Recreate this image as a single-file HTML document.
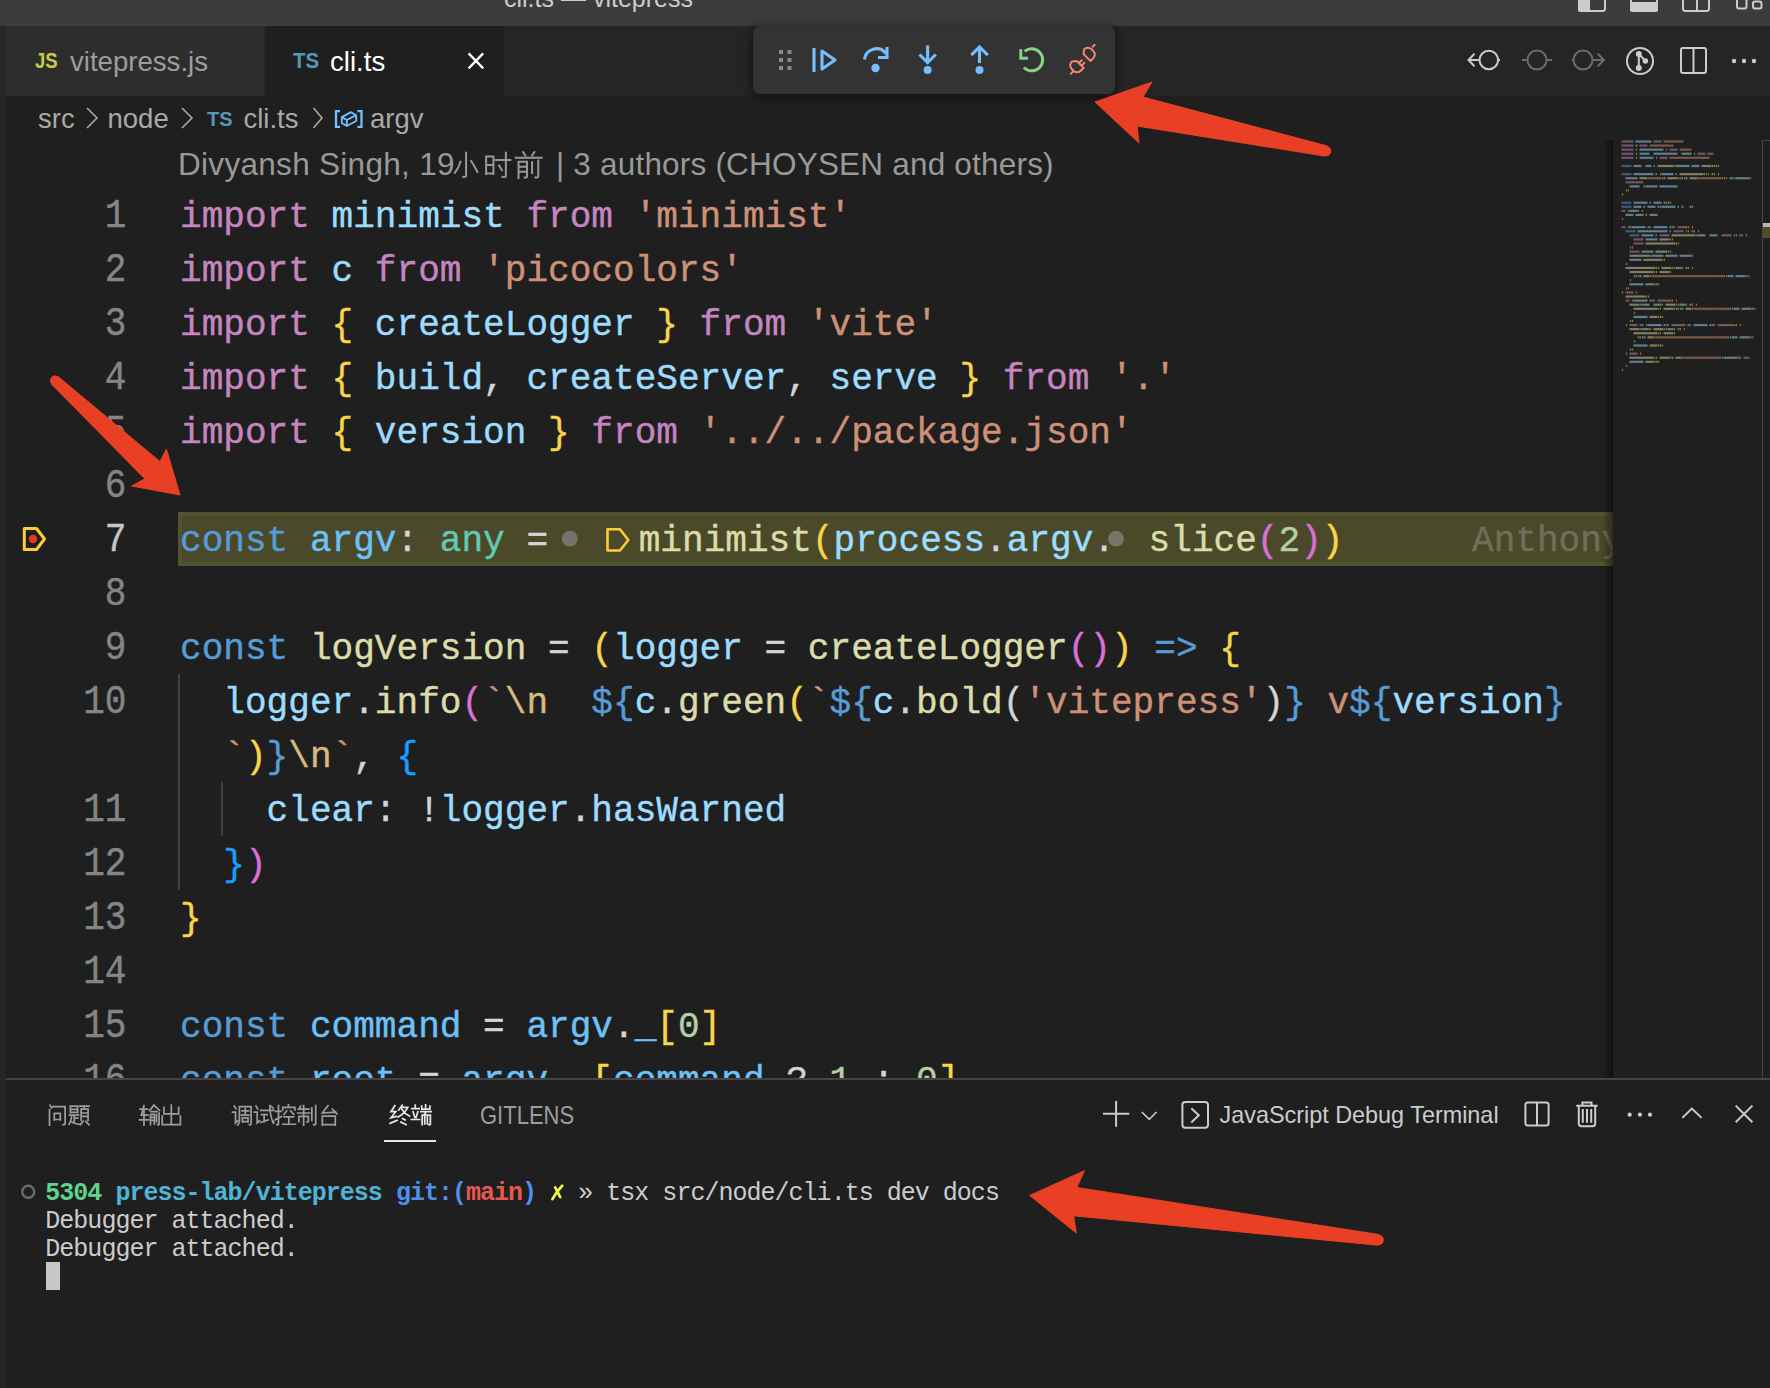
<!DOCTYPE html>
<html><head><meta charset="utf-8">
<style>
*{margin:0;padding:0;box-sizing:border-box}
html,body{width:1770px;height:1388px;overflow:hidden;background:#1f1f1f}
body{position:relative;font-family:"Liberation Sans",sans-serif}
.abs{position:absolute}
.mono{font-family:"Liberation Mono",monospace}
.cl{position:absolute;white-space:pre;font-family:"Liberation Mono",monospace;font-size:36.08px;-webkit-text-stroke:0.4px currentColor;line-height:54px;height:54px}
.ln{position:absolute;left:61.5px;width:65px;text-align:right;white-space:pre;-webkit-text-stroke:0.4px currentColor;transform:scaleY(1.11);transform-origin:0 36.6px;font-family:"Liberation Mono",monospace;font-size:36.08px;line-height:54px;height:54px}
.t{position:absolute;white-space:pre;line-height:1}
</style></head><body>
<!-- title bar -->
<div class="abs" style="left:0;top:0;width:1770px;height:26px;background:#3c3c3c"></div>
<div class="t" style="left:504px;top:-14px;font-size:25px;color:#cccccc">cli.ts — vitepress</div>
<svg class="abs" style="left:0;top:0" width="1770" height="26">
 <g fill="none" stroke="#cccccc" stroke-width="2">
  <rect x="1579" y="-6" width="26" height="17" rx="2.5"/>
  <rect x="1631" y="-6" width="26" height="17" rx="2.5"/>
  <rect x="1683" y="-6" width="26" height="17" rx="2.5"/><line x1="1697" y1="-6" x2="1697" y2="11"/>
  <rect x="1737" y="-6" width="9.5" height="14.5" rx="2"/>
  <rect x="1753" y="1.5" width="8.5" height="7" rx="2"/>
 </g>
 <rect x="1578" y="-6" width="12" height="18" rx="2.5" fill="#cccccc"/>
 <rect x="1630" y="2" width="28" height="10" rx="2.5" fill="#cccccc"/>
</svg>
<!-- left strip -->
<div class="abs" style="left:0;top:26px;width:6px;height:1362px;background:#262626"></div>
<!-- tab bar -->
<div class="abs" style="left:6px;top:26px;width:1764px;height:70px;background:#252526"></div>
<div class="abs" style="left:6px;top:26px;width:258px;height:70px;background:#2d2d2d"></div>
<div class="abs" style="left:266px;top:26px;width:238px;height:70px;background:#1f1f1f"></div>
<div class="t" style="left:35px;top:49.5px;font-size:22px;font-weight:bold;color:#cbcb41;transform:scaleX(0.84);transform-origin:0 0">JS</div>
<div class="t" style="left:70px;top:47.8px;font-size:27.6px;color:#9d9d9d">vitepress.js</div>
<div class="t" style="left:293px;top:49.5px;font-size:22px;font-weight:bold;color:#519aba;transform:scaleX(0.93);transform-origin:0 0">TS</div>
<div class="t" style="left:330px;top:48.3px;font-size:27.6px;color:#ffffff">cli.ts</div>
<svg class="abs" style="left:0;top:0" width="1770" height="100">
 <path d="M468.6 53.4L483.2 68.4M483.2 53.4L468.6 68.4" stroke="#ffffff" stroke-width="2.3"/>
 <!-- editor actions -->
 <g fill="none" stroke="#cccccc" stroke-width="2">
  <circle cx="1488.8" cy="60" r="9.3"/><path d="M1468.5 60H1479.5M1498 60H1500M1474.5 53.8L1468.5 60L1474.5 66.2"/>
 </g>
 <g fill="none" stroke="#6b6b6b" stroke-width="2">
  <circle cx="1537" cy="60" r="9.5"/><path d="M1522 60H1527.5M1546.5 60H1552"/>
  <circle cx="1583" cy="60" r="9.5"/><path d="M1572 60H1573.5M1592.5 60H1604M1597.5 53.5L1604 60L1597.5 66.5"/>
 </g>
 <g fill="none" stroke="#cccccc" stroke-width="2">
  <circle cx="1640" cy="61" r="13"/><path d="M1638.8 54V68M1638.8 54L1645.4 61"/>
  <rect x="1681" y="48" width="25" height="25" rx="2"/><line x1="1693.5" y1="48" x2="1693.5" y2="73"/>
 </g>
 <g fill="#cccccc"><circle cx="1638.8" cy="54" r="3"/><circle cx="1645.4" cy="61" r="2.8"/><circle cx="1638.8" cy="68" r="3"/>
  <circle cx="1734" cy="61" r="2.2"/><circle cx="1744" cy="61" r="2.2"/><circle cx="1754" cy="61" r="2.2"/></g>
</svg>
<!-- debug toolbar -->
<div class="abs" style="left:753px;top:26px;width:362px;height:68px;background:#333333;border-radius:7px;box-shadow:0 2px 8px 2px rgba(0,0,0,0.45)"></div>
<svg class="abs" style="left:0;top:0" width="1200" height="100">
 <g fill="#8a8a8a"><rect x="779" y="50" width="4" height="4"/><rect x="787.5" y="50" width="4" height="4"/><rect x="779" y="58" width="4" height="4"/><rect x="787.5" y="58" width="4" height="4"/><rect x="779" y="66" width="4" height="4"/><rect x="787.5" y="66" width="4" height="4"/></g>
 <g fill="none" stroke="#75beff" stroke-width="3.1">
  <line x1="814" y1="48" x2="814" y2="72"/>
  <path d="M822 51L835 60L822 69Z" stroke-linejoin="round"/>
  <path d="M864.5 59.5A12 12 0 0 1 886 53.5"/><path d="M887 47V57.5H878"/>
  <path d="M927.6 45.5V62M919.5 54.5L927.6 62.5L935.8 54.5"/>
  <path d="M979.5 63V47.5M971.3 55.2L979.5 47L987.8 55.2"/>
 </g>
 <g fill="#75beff"><circle cx="875.5" cy="68" r="4.2"/><circle cx="927.6" cy="70" r="4"/><circle cx="979.5" cy="70" r="4"/></g>
 <g fill="none" stroke="#89d185" stroke-width="3">
  <path d="M1024.6 51.3A11 11 0 1 1 1023.8 67.5"/><path d="M1020.8 49.2V58.2H1028"/>
 </g>
 <g fill="none" stroke="#f48771" stroke-width="2.3" stroke-linejoin="round" transform="translate(1081 59.3) scale(0.86) translate(-1083 -59)">
  <path d="M1074 73L1070.5 76.5"/><path d="M1096 45L1099.5 41.5"/>
  <path d="M1078 61L1086 69L1083 72A6 6 0 0 1 1074.5 72.5L1072 70A6 6 0 0 1 1072.5 61.5Z"/>
  <path d="M1080.5 63.5L1084.5 59.5M1083.5 66.5L1087.5 62.5"/>
  <path d="M1086 53L1094 61L1097 58A6 6 0 0 0 1097.5 49.5L1095 47A6 6 0 0 0 1086.5 47.5Z"/>
 </g>
</svg>
<!-- breadcrumbs -->
<div class="t" style="left:38px;top:104.8px;font-size:27.5px;color:#a9a9a9;">src</div>
<div class="t" style="left:107.5px;top:104.8px;font-size:27.5px;color:#a9a9a9;">node</div>
<div class="t" style="left:207px;top:109px;font-size:20px;font-weight:bold;color:#519aba">TS</div>
<div class="t" style="left:243.5px;top:104.8px;font-size:27.5px;color:#a9a9a9;">cli.ts</div>
<div class="t" style="left:370px;top:104.8px;font-size:27.5px;color:#a9a9a9;">argv</div>
<svg class="abs" style="left:0;top:96px" width="600" height="46">
 <g fill="none" stroke="#a9a9a9" stroke-width="1.6"><path d="M87 12L97 22L87 32M182 12L192 22L182 32M313.5 12L322 22L313.5 32"/></g>
 <g fill="none" stroke="#75beff" stroke-width="2">
  <path d="M340 15.2H336V30.8H340M357.5 15.2H361.5V30.8H357.5" stroke-width="2.3"/>
  <path d="M341.8 21.2L351 16.2L356.2 19.2V25L346.8 30L341.8 27Z M341.8 21.2L346.8 24L356.2 19.2M346.8 24V30" stroke-width="1.9" stroke-linejoin="round"/>
 </g>
</svg>
<!-- blame -->
<div class="t" style="left:178.00px;top:148.5px;font-size:31.5px;letter-spacing:0.3px;color:#999999">Divyansh</div>
<div class="t" style="left:319.00px;top:148.5px;font-size:31.5px;letter-spacing:0.3px;color:#999999">Singh,</div>
<div class="t" style="left:419.17px;top:148.5px;font-size:31.5px;letter-spacing:0.3px;color:#999999">19</div>
<div class="t" style="left:556.00px;top:148.5px;font-size:31.5px;letter-spacing:0.2px;color:#999999">|</div>
<div class="t" style="left:573.33px;top:148.5px;font-size:31.5px;letter-spacing:0.2px;color:#999999">3</div>
<div class="t" style="left:600.00px;top:148.5px;font-size:31.5px;letter-spacing:0.2px;color:#999999">authors</div>
<div class="t" style="left:715.42px;top:148.5px;font-size:31.5px;letter-spacing:0.2px;color:#999999">(CHOYSEN</div>
<div class="t" style="left:892.23px;top:148.5px;font-size:31.5px;letter-spacing:0.2px;color:#999999">and</div>
<div class="t" style="left:954.34px;top:148.5px;font-size:31.5px;letter-spacing:0.2px;color:#999999">others)</div>
<svg class="abs" style="left:0;top:0" width="700" height="200"><g transform="translate(452.00 150.94) scale(0.2819)"><path d="M50 6V86Q50 94 40 92M30 38Q24 60 10 78M68 36Q80 55 90 74" stroke="#999999" stroke-width="7.0" fill="none" stroke-linecap="square"/></g><g transform="translate(483.30 150.94) scale(0.2819)"><path d="M10 20V82M10 20H36V82M10 50H36M10 80H36M44 32H96M80 6V88Q80 95 68 92M56 52L66 68" stroke="#999999" stroke-width="7.0" fill="none" stroke-linecap="square"/></g><g transform="translate(514.60 150.94) scale(0.2819)"><path d="M30 4L38 16M70 4L62 16M4 24H96M14 38V96M14 38H44V90Q44 96 36 94M14 56H44M14 74H44M62 40V78M84 34V90Q84 96 74 94" stroke="#999999" stroke-width="7.0" fill="none" stroke-linecap="square"/></g></svg>
<!-- editor code area (clipped) -->
<div class="abs" style="left:0;top:0;width:1613px;height:1078px;overflow:hidden">
 <div class="abs" style="left:178px;top:512px;width:1435px;height:54px;background:#4a4a2a;border:4px solid #535331"></div>
 <svg class="abs" style="left:0;top:0" width="1613" height="1078">
  <g stroke="#404040" stroke-width="2"><line x1="179" y1="674" x2="179" y2="890"/><line x1="222" y1="782" x2="222" y2="836"/></g>
  <path d="M24.3 528.5H36.5L44.5 539L36.5 549.5H24.3Z" fill="none" stroke="#ffcc33" stroke-width="3" stroke-linejoin="round"/>
  <circle cx="33" cy="539" r="4.2" fill="#e03d22"/>
  <circle cx="569.8" cy="538.7" r="7.9" fill="#74746a"/>
  <circle cx="1116" cy="538.7" r="7.9" fill="#74746a"/>
  <path d="M607.5 529.3H620L628.3 540L620 550.5H607.5Z" fill="none" stroke="#ffcc33" stroke-width="2.6" stroke-linejoin="round"/>
 </svg>
<div class="ln" style="top:190.7px;color:#858585">1</div>
<div class="cl" style="top:190.7px;left:180.00px;color:#c586c0">import</div><div class="cl" style="top:190.7px;left:331.55px;color:#9cdcfe">minimist</div><div class="cl" style="top:190.7px;left:526.40px;color:#c586c0">from</div><div class="cl" style="top:190.7px;left:634.65px;color:#ce9178">&#x27;minimist&#x27;</div>
<div class="ln" style="top:244.7px;color:#858585">2</div>
<div class="cl" style="top:244.7px;left:180.00px;color:#c586c0">import</div><div class="cl" style="top:244.7px;left:331.55px;color:#9cdcfe">c</div><div class="cl" style="top:244.7px;left:374.85px;color:#c586c0">from</div><div class="cl" style="top:244.7px;left:483.10px;color:#ce9178">&#x27;picocolors&#x27;</div>
<div class="ln" style="top:298.7px;color:#858585">3</div>
<div class="cl" style="top:298.7px;left:180.00px;color:#c586c0">import</div><div class="cl" style="top:298.7px;left:331.55px;color:#f8d648">{</div><div class="cl" style="top:298.7px;left:374.85px;color:#9cdcfe">createLogger</div><div class="cl" style="top:298.7px;left:656.30px;color:#f8d648">}</div><div class="cl" style="top:298.7px;left:699.60px;color:#c586c0">from</div><div class="cl" style="top:298.7px;left:807.85px;color:#ce9178">&#x27;vite&#x27;</div>
<div class="ln" style="top:352.7px;color:#858585">4</div>
<div class="cl" style="top:352.7px;left:180.00px;color:#c586c0">import</div><div class="cl" style="top:352.7px;left:331.55px;color:#f8d648">{</div><div class="cl" style="top:352.7px;left:374.85px;color:#9cdcfe">build</div><div class="cl" style="top:352.7px;left:483.10px;color:#d4d4d4">,</div><div class="cl" style="top:352.7px;left:526.40px;color:#9cdcfe">createServer</div><div class="cl" style="top:352.7px;left:786.20px;color:#d4d4d4">,</div><div class="cl" style="top:352.7px;left:829.50px;color:#9cdcfe">serve</div><div class="cl" style="top:352.7px;left:959.40px;color:#f8d648">}</div><div class="cl" style="top:352.7px;left:1002.70px;color:#c586c0">from</div><div class="cl" style="top:352.7px;left:1110.95px;color:#ce9178">&#x27;.&#x27;</div>
<div class="ln" style="top:406.7px;color:#858585">5</div>
<div class="cl" style="top:406.7px;left:180.00px;color:#c586c0">import</div><div class="cl" style="top:406.7px;left:331.55px;color:#f8d648">{</div><div class="cl" style="top:406.7px;left:374.85px;color:#9cdcfe">version</div><div class="cl" style="top:406.7px;left:548.05px;color:#f8d648">}</div><div class="cl" style="top:406.7px;left:591.35px;color:#c586c0">from</div><div class="cl" style="top:406.7px;left:699.60px;color:#ce9178">&#x27;../../package.json&#x27;</div>
<div class="ln" style="top:460.7px;color:#858585">6</div>
<div class="ln" style="top:514.7px;color:#c6c6c6">7</div>
<div class="cl" style="top:514.7px;left:180.00px;color:#569cd6">const</div><div class="cl" style="top:514.7px;left:309.90px;color:#6cc2f7">argv</div><div class="cl" style="top:514.7px;left:396.50px;color:#d4d4d4">:</div><div class="cl" style="top:514.7px;left:439.80px;color:#62c9b2">any</div><div class="cl" style="top:514.7px;left:526.40px;color:#d4d4d4">=</div>
<div class="ln" style="top:568.7px;color:#858585">8</div>
<div class="ln" style="top:622.7px;color:#858585">9</div>
<div class="cl" style="top:622.7px;left:180.00px;color:#569cd6">const</div><div class="cl" style="top:622.7px;left:309.90px;color:#dcdcaa">logVersion</div><div class="cl" style="top:622.7px;left:548.05px;color:#d4d4d4">=</div><div class="cl" style="top:622.7px;left:591.35px;color:#f8d648">(</div><div class="cl" style="top:622.7px;left:613.00px;color:#9cdcfe">logger</div><div class="cl" style="top:622.7px;left:764.55px;color:#d4d4d4">=</div><div class="cl" style="top:622.7px;left:807.85px;color:#dcdcaa">createLogger</div><div class="cl" style="top:622.7px;left:1067.65px;color:#da70d6">()</div><div class="cl" style="top:622.7px;left:1110.95px;color:#f8d648">)</div><div class="cl" style="top:622.7px;left:1154.25px;color:#569cd6">=&gt;</div><div class="cl" style="top:622.7px;left:1219.20px;color:#f8d648">{</div>
<div class="ln" style="top:676.7px;color:#858585">10</div>
<div class="cl" style="top:676.7px;left:223.30px;color:#9cdcfe">logger</div><div class="cl" style="top:676.7px;left:353.20px;color:#d4d4d4">.</div><div class="cl" style="top:676.7px;left:374.85px;color:#dcdcaa">info</div><div class="cl" style="top:676.7px;left:461.45px;color:#da70d6">(</div><div class="cl" style="top:676.7px;left:483.10px;color:#ce9178">`</div><div class="cl" style="top:676.7px;left:504.75px;color:#d7ba7d">\n</div><div class="cl" style="top:676.7px;left:591.35px;color:#569cd6">${</div><div class="cl" style="top:676.7px;left:634.65px;color:#9cdcfe">c</div><div class="cl" style="top:676.7px;left:656.30px;color:#d4d4d4">.</div><div class="cl" style="top:676.7px;left:677.95px;color:#dcdcaa">green</div><div class="cl" style="top:676.7px;left:786.20px;color:#f8d648">(</div><div class="cl" style="top:676.7px;left:807.85px;color:#ce9178">`</div><div class="cl" style="top:676.7px;left:829.50px;color:#569cd6">${</div><div class="cl" style="top:676.7px;left:872.80px;color:#9cdcfe">c</div><div class="cl" style="top:676.7px;left:894.45px;color:#d4d4d4">.</div><div class="cl" style="top:676.7px;left:916.10px;color:#dcdcaa">bold</div><div class="cl" style="top:676.7px;left:1002.70px;color:#d4d4d4">(</div><div class="cl" style="top:676.7px;left:1024.35px;color:#ce9178">&#x27;vitepress&#x27;</div><div class="cl" style="top:676.7px;left:1262.50px;color:#d4d4d4">)</div><div class="cl" style="top:676.7px;left:1284.15px;color:#569cd6">}</div><div class="cl" style="top:676.7px;left:1327.45px;color:#ce9178">v</div><div class="cl" style="top:676.7px;left:1349.10px;color:#569cd6">${</div><div class="cl" style="top:676.7px;left:1392.40px;color:#9cdcfe">version</div><div class="cl" style="top:676.7px;left:1543.95px;color:#569cd6">}</div>
<div class="cl" style="top:730.7px;left:223.30px;color:#ce9178">`</div><div class="cl" style="top:730.7px;left:244.95px;color:#f8d648">)</div><div class="cl" style="top:730.7px;left:266.60px;color:#569cd6">}</div><div class="cl" style="top:730.7px;left:288.25px;color:#d7ba7d">\n</div><div class="cl" style="top:730.7px;left:331.55px;color:#ce9178">`</div><div class="cl" style="top:730.7px;left:353.20px;color:#d4d4d4">,</div><div class="cl" style="top:730.7px;left:396.50px;color:#179fff">{</div>
<div class="ln" style="top:784.7px;color:#858585">11</div>
<div class="cl" style="top:784.7px;left:266.60px;color:#9cdcfe">clear</div><div class="cl" style="top:784.7px;left:374.85px;color:#d4d4d4">:</div><div class="cl" style="top:784.7px;left:418.15px;color:#d4d4d4">!</div><div class="cl" style="top:784.7px;left:439.80px;color:#9cdcfe">logger</div><div class="cl" style="top:784.7px;left:569.70px;color:#d4d4d4">.</div><div class="cl" style="top:784.7px;left:591.35px;color:#9cdcfe">hasWarned</div>
<div class="ln" style="top:838.7px;color:#858585">12</div>
<div class="cl" style="top:838.7px;left:223.30px;color:#179fff">}</div><div class="cl" style="top:838.7px;left:244.95px;color:#da70d6">)</div>
<div class="ln" style="top:892.7px;color:#858585">13</div>
<div class="cl" style="top:892.7px;left:180.00px;color:#f8d648">}</div>
<div class="ln" style="top:946.7px;color:#858585">14</div>
<div class="ln" style="top:1000.7px;color:#858585">15</div>
<div class="cl" style="top:1000.7px;left:180.00px;color:#569cd6">const</div><div class="cl" style="top:1000.7px;left:309.90px;color:#6cc2f7">command</div><div class="cl" style="top:1000.7px;left:483.10px;color:#d4d4d4">=</div><div class="cl" style="top:1000.7px;left:526.40px;color:#6cc2f7">argv</div><div class="cl" style="top:1000.7px;left:613.00px;color:#d4d4d4">.</div><div class="cl" style="top:1000.7px;left:634.65px;color:#6cc2f7">_</div><div class="cl" style="top:1000.7px;left:656.30px;color:#f8d648">[</div><div class="cl" style="top:1000.7px;left:677.95px;color:#b5cea8">0</div><div class="cl" style="top:1000.7px;left:699.60px;color:#f8d648">]</div>
<div class="ln" style="top:1054.7px;color:#858585">16</div>
<div class="cl" style="top:1054.7px;left:180.00px;color:#569cd6">const</div><div class="cl" style="top:1054.7px;left:309.90px;color:#6cc2f7">root</div><div class="cl" style="top:1054.7px;left:418.15px;color:#d4d4d4">=</div><div class="cl" style="top:1054.7px;left:461.45px;color:#6cc2f7">argv</div><div class="cl" style="top:1054.7px;left:548.05px;color:#d4d4d4">.</div><div class="cl" style="top:1054.7px;left:569.70px;color:#6cc2f7">_</div><div class="cl" style="top:1054.7px;left:591.35px;color:#f8d648">[</div><div class="cl" style="top:1054.7px;left:613.00px;color:#6cc2f7">command</div><div class="cl" style="top:1054.7px;left:786.20px;color:#d4d4d4">?</div><div class="cl" style="top:1054.7px;left:829.50px;color:#b5cea8">1</div><div class="cl" style="top:1054.7px;left:872.80px;color:#d4d4d4">:</div><div class="cl" style="top:1054.7px;left:916.10px;color:#b5cea8">0</div><div class="cl" style="top:1054.7px;left:937.75px;color:#f8d648">]</div>
<div class="cl" style="top:514.7px;left:638.70px;color:#dcdcaa">minimist</div><div class="cl" style="top:514.7px;left:811.90px;color:#f8d648">(</div><div class="cl" style="top:514.7px;left:833.55px;color:#9cdcfe">process</div><div class="cl" style="top:514.7px;left:985.10px;color:#d4d4d4">.</div><div class="cl" style="top:514.7px;left:1006.75px;color:#9cdcfe">argv</div><div class="cl" style="top:514.7px;left:1093.35px;color:#d4d4d4">.</div>
<div class="cl" style="top:514.7px;left:1148.60px;color:#dcdcaa">slice</div><div class="cl" style="top:514.7px;left:1256.85px;color:#da70d6">(</div><div class="cl" style="top:514.7px;left:1278.50px;color:#b5cea8">2</div><div class="cl" style="top:514.7px;left:1300.15px;color:#da70d6">)</div><div class="cl" style="top:514.7px;left:1321.80px;color:#f8d648">)</div>
<div class="cl" style="top:514.7px;left:1472px;color:#6f6f5c">Anthony</div>
</div>
<!-- minimap -->
<div class="abs" style="left:1613px;top:96px;width:157px;height:982px;background:#1f1f1f"></div>
<svg class="abs" style="left:0;top:0" width="1770" height="1078">
 <defs><linearGradient id="msh" x1="0" x2="1"><stop offset="0" stop-color="#000" stop-opacity="0"/><stop offset="1" stop-color="#000" stop-opacity="0.5"/></linearGradient></defs>
 <rect x="1603" y="140" width="10" height="938" fill="url(#msh)"/>
 <g opacity="0.5"><rect x="1621.5" y="140.40" width="12.0" height="2.2" fill="#c586c0"/><rect x="1635.5" y="140.40" width="16.0" height="2.2" fill="#9cdcfe"/><rect x="1653.5" y="140.40" width="8.0" height="2.2" fill="#c586c0"/><rect x="1663.5" y="140.40" width="20.0" height="2.2" fill="#ce9178"/><rect x="1621.5" y="144.48" width="12.0" height="2.2" fill="#c586c0"/><rect x="1635.5" y="144.48" width="2.0" height="2.2" fill="#9cdcfe"/><rect x="1639.5" y="144.48" width="8.0" height="2.2" fill="#c586c0"/><rect x="1649.5" y="144.48" width="24.0" height="2.2" fill="#ce9178"/><rect x="1621.5" y="148.56" width="12.0" height="2.2" fill="#c586c0"/><rect x="1635.9" y="148.56" width="1.2" height="2.2" fill="#ffd700"/><rect x="1639.5" y="148.56" width="24.0" height="2.2" fill="#9cdcfe"/><rect x="1665.9" y="148.56" width="1.2" height="2.2" fill="#ffd700"/><rect x="1669.5" y="148.56" width="8.0" height="2.2" fill="#c586c0"/><rect x="1679.5" y="148.56" width="12.0" height="2.2" fill="#ce9178"/><rect x="1621.5" y="152.64" width="12.0" height="2.2" fill="#c586c0"/><rect x="1635.9" y="152.64" width="1.2" height="2.2" fill="#ffd700"/><rect x="1639.5" y="152.64" width="10.0" height="2.2" fill="#9cdcfe"/><rect x="1653.5" y="152.64" width="24.0" height="2.2" fill="#9cdcfe"/><rect x="1681.5" y="152.64" width="10.0" height="2.2" fill="#9cdcfe"/><rect x="1693.9" y="152.64" width="1.2" height="2.2" fill="#ffd700"/><rect x="1697.5" y="152.64" width="8.0" height="2.2" fill="#c586c0"/><rect x="1707.5" y="152.64" width="6.0" height="2.2" fill="#ce9178"/><rect x="1621.5" y="156.72" width="12.0" height="2.2" fill="#c586c0"/><rect x="1635.9" y="156.72" width="1.2" height="2.2" fill="#ffd700"/><rect x="1639.5" y="156.72" width="14.0" height="2.2" fill="#9cdcfe"/><rect x="1655.9" y="156.72" width="1.2" height="2.2" fill="#ffd700"/><rect x="1659.5" y="156.72" width="8.0" height="2.2" fill="#c586c0"/><rect x="1669.5" y="156.72" width="40.0" height="2.2" fill="#ce9178"/><rect x="1621.5" y="164.88" width="10.0" height="2.2" fill="#569cd6"/><rect x="1633.5" y="164.88" width="8.0" height="2.2" fill="#9cdcfe"/><rect x="1645.5" y="164.88" width="6.0" height="2.2" fill="#9cdcfe"/><rect x="1653.5" y="164.88" width="1.4" height="2.2" fill="#d4d4d4"/><rect x="1657.5" y="164.88" width="16.0" height="2.2" fill="#dcdcaa"/><rect x="1673.9" y="164.88" width="1.2" height="2.2" fill="#ffd700"/><rect x="1675.5" y="164.88" width="14.0" height="2.2" fill="#9cdcfe"/><rect x="1691.5" y="164.88" width="8.0" height="2.2" fill="#9cdcfe"/><rect x="1701.5" y="164.88" width="10.0" height="2.2" fill="#dcdcaa"/><rect x="1711.9" y="164.88" width="1.2" height="2.2" fill="#ffd700"/><rect x="1713.5" y="164.88" width="2.0" height="2.2" fill="#b5cea8"/><rect x="1715.9" y="164.88" width="1.2" height="2.2" fill="#ffd700"/><rect x="1717.9" y="164.88" width="1.2" height="2.2" fill="#ffd700"/><rect x="1621.5" y="173.04" width="10.0" height="2.2" fill="#569cd6"/><rect x="1633.5" y="173.04" width="20.0" height="2.2" fill="#9cdcfe"/><rect x="1655.5" y="173.04" width="1.4" height="2.2" fill="#d4d4d4"/><rect x="1659.9" y="173.04" width="1.2" height="2.2" fill="#ffd700"/><rect x="1661.5" y="173.04" width="12.0" height="2.2" fill="#9cdcfe"/><rect x="1675.5" y="173.04" width="1.4" height="2.2" fill="#d4d4d4"/><rect x="1679.5" y="173.04" width="24.0" height="2.2" fill="#dcdcaa"/><rect x="1703.9" y="173.04" width="1.2" height="2.2" fill="#ffd700"/><rect x="1705.9" y="173.04" width="1.2" height="2.2" fill="#ffd700"/><rect x="1707.9" y="173.04" width="1.2" height="2.2" fill="#ffd700"/><rect x="1711.5" y="173.04" width="1.4" height="2.2" fill="#d4d4d4"/><rect x="1713.5" y="173.04" width="1.4" height="2.2" fill="#d4d4d4"/><rect x="1717.9" y="173.04" width="1.2" height="2.2" fill="#ffd700"/><rect x="1625.5" y="177.12" width="12.0" height="2.2" fill="#9cdcfe"/><rect x="1639.5" y="177.12" width="8.0" height="2.2" fill="#dcdcaa"/><rect x="1647.9" y="177.12" width="1.2" height="2.2" fill="#ffd700"/><rect x="1649.5" y="177.12" width="10.0" height="2.2" fill="#ce9178"/><rect x="1659.5" y="177.12" width="1.4" height="2.2" fill="#d4d4d4"/><rect x="1661.9" y="177.12" width="1.2" height="2.2" fill="#ffd700"/><rect x="1663.5" y="177.12" width="2.0" height="2.2" fill="#9cdcfe"/><rect x="1667.5" y="177.12" width="10.0" height="2.2" fill="#dcdcaa"/><rect x="1677.9" y="177.12" width="1.2" height="2.2" fill="#ffd700"/><rect x="1679.5" y="177.12" width="2.0" height="2.2" fill="#ce9178"/><rect x="1681.5" y="177.12" width="1.4" height="2.2" fill="#d4d4d4"/><rect x="1683.9" y="177.12" width="1.2" height="2.2" fill="#ffd700"/><rect x="1685.5" y="177.12" width="2.0" height="2.2" fill="#9cdcfe"/><rect x="1689.5" y="177.12" width="8.0" height="2.2" fill="#dcdcaa"/><rect x="1697.9" y="177.12" width="1.2" height="2.2" fill="#ffd700"/><rect x="1699.5" y="177.12" width="22.0" height="2.2" fill="#ce9178"/><rect x="1721.9" y="177.12" width="1.2" height="2.2" fill="#ffd700"/><rect x="1723.9" y="177.12" width="1.2" height="2.2" fill="#ffd700"/><rect x="1725.9" y="177.12" width="1.2" height="2.2" fill="#ffd700"/><rect x="1729.5" y="177.12" width="2.0" height="2.2" fill="#9cdcfe"/><rect x="1731.5" y="177.12" width="1.4" height="2.2" fill="#d4d4d4"/><rect x="1733.9" y="177.12" width="1.2" height="2.2" fill="#ffd700"/><rect x="1735.5" y="177.12" width="14.0" height="2.2" fill="#9cdcfe"/><rect x="1749.9" y="177.12" width="1.2" height="2.2" fill="#ffd700"/><rect x="1625.5" y="181.20" width="10.0" height="2.2" fill="#ce9178"/><rect x="1635.5" y="181.20" width="8.0" height="2.2" fill="#ce9178"/><rect x="1629.5" y="185.28" width="10.0" height="2.2" fill="#9cdcfe"/><rect x="1643.5" y="185.28" width="1.4" height="2.2" fill="#d4d4d4"/><rect x="1645.5" y="185.28" width="12.0" height="2.2" fill="#9cdcfe"/><rect x="1659.5" y="185.28" width="18.0" height="2.2" fill="#9cdcfe"/><rect x="1625.9" y="189.36" width="1.2" height="2.2" fill="#ffd700"/><rect x="1627.9" y="189.36" width="1.2" height="2.2" fill="#ffd700"/><rect x="1621.9" y="193.44" width="1.2" height="2.2" fill="#ffd700"/><rect x="1621.5" y="201.60" width="10.0" height="2.2" fill="#569cd6"/><rect x="1633.5" y="201.60" width="14.0" height="2.2" fill="#9cdcfe"/><rect x="1649.5" y="201.60" width="1.4" height="2.2" fill="#d4d4d4"/><rect x="1653.5" y="201.60" width="8.0" height="2.2" fill="#9cdcfe"/><rect x="1663.5" y="201.60" width="2.0" height="2.2" fill="#9cdcfe"/><rect x="1665.9" y="201.60" width="1.2" height="2.2" fill="#ffd700"/><rect x="1667.5" y="201.60" width="2.0" height="2.2" fill="#b5cea8"/><rect x="1669.9" y="201.60" width="1.2" height="2.2" fill="#ffd700"/><rect x="1621.5" y="205.68" width="10.0" height="2.2" fill="#569cd6"/><rect x="1633.5" y="205.68" width="8.0" height="2.2" fill="#9cdcfe"/><rect x="1643.5" y="205.68" width="1.4" height="2.2" fill="#d4d4d4"/><rect x="1647.5" y="205.68" width="8.0" height="2.2" fill="#9cdcfe"/><rect x="1657.5" y="205.68" width="2.0" height="2.2" fill="#9cdcfe"/><rect x="1659.9" y="205.68" width="1.2" height="2.2" fill="#ffd700"/><rect x="1661.5" y="205.68" width="14.0" height="2.2" fill="#9cdcfe"/><rect x="1677.5" y="205.68" width="1.4" height="2.2" fill="#d4d4d4"/><rect x="1681.5" y="205.68" width="2.0" height="2.2" fill="#b5cea8"/><rect x="1689.5" y="205.68" width="2.0" height="2.2" fill="#b5cea8"/><rect x="1691.9" y="205.68" width="1.2" height="2.2" fill="#ffd700"/><rect x="1621.5" y="209.76" width="4.0" height="2.2" fill="#c586c0"/><rect x="1627.9" y="209.76" width="1.2" height="2.2" fill="#ffd700"/><rect x="1629.5" y="209.76" width="8.0" height="2.2" fill="#9cdcfe"/><rect x="1637.9" y="209.76" width="1.2" height="2.2" fill="#ffd700"/><rect x="1641.9" y="209.76" width="1.2" height="2.2" fill="#ffd700"/><rect x="1625.5" y="213.84" width="8.0" height="2.2" fill="#9cdcfe"/><rect x="1635.5" y="213.84" width="8.0" height="2.2" fill="#9cdcfe"/><rect x="1645.5" y="213.84" width="1.4" height="2.2" fill="#d4d4d4"/><rect x="1649.5" y="213.84" width="8.0" height="2.2" fill="#9cdcfe"/><rect x="1621.9" y="217.92" width="1.2" height="2.2" fill="#ffd700"/><rect x="1621.5" y="226.08" width="4.0" height="2.2" fill="#c586c0"/><rect x="1627.9" y="226.08" width="1.2" height="2.2" fill="#ffd700"/><rect x="1629.5" y="226.08" width="1.4" height="2.2" fill="#d4d4d4"/><rect x="1631.5" y="226.08" width="14.0" height="2.2" fill="#9cdcfe"/><rect x="1647.5" y="226.08" width="1.4" height="2.2" fill="#d4d4d4"/><rect x="1649.5" y="226.08" width="1.4" height="2.2" fill="#d4d4d4"/><rect x="1653.5" y="226.08" width="14.0" height="2.2" fill="#9cdcfe"/><rect x="1669.5" y="226.08" width="1.4" height="2.2" fill="#d4d4d4"/><rect x="1671.5" y="226.08" width="1.4" height="2.2" fill="#d4d4d4"/><rect x="1673.5" y="226.08" width="1.4" height="2.2" fill="#d4d4d4"/><rect x="1677.5" y="226.08" width="10.0" height="2.2" fill="#ce9178"/><rect x="1687.9" y="226.08" width="1.2" height="2.2" fill="#ffd700"/><rect x="1691.9" y="226.08" width="1.2" height="2.2" fill="#ffd700"/><rect x="1625.5" y="230.16" width="10.0" height="2.2" fill="#569cd6"/><rect x="1637.5" y="230.16" width="30.0" height="2.2" fill="#9cdcfe"/><rect x="1669.5" y="230.16" width="1.4" height="2.2" fill="#d4d4d4"/><rect x="1673.5" y="230.16" width="10.0" height="2.2" fill="#c586c0"/><rect x="1685.9" y="230.16" width="1.2" height="2.2" fill="#ffd700"/><rect x="1687.9" y="230.16" width="1.2" height="2.2" fill="#ffd700"/><rect x="1691.5" y="230.16" width="1.4" height="2.2" fill="#d4d4d4"/><rect x="1693.5" y="230.16" width="1.4" height="2.2" fill="#d4d4d4"/><rect x="1697.9" y="230.16" width="1.2" height="2.2" fill="#ffd700"/><rect x="1629.5" y="234.24" width="10.0" height="2.2" fill="#569cd6"/><rect x="1641.5" y="234.24" width="12.0" height="2.2" fill="#9cdcfe"/><rect x="1655.5" y="234.24" width="1.4" height="2.2" fill="#d4d4d4"/><rect x="1659.5" y="234.24" width="10.0" height="2.2" fill="#c586c0"/><rect x="1671.5" y="234.24" width="24.0" height="2.2" fill="#dcdcaa"/><rect x="1695.9" y="234.24" width="1.2" height="2.2" fill="#ffd700"/><rect x="1697.5" y="234.24" width="8.0" height="2.2" fill="#9cdcfe"/><rect x="1709.5" y="234.24" width="8.0" height="2.2" fill="#9cdcfe"/><rect x="1721.5" y="234.24" width="10.0" height="2.2" fill="#c586c0"/><rect x="1733.9" y="234.24" width="1.2" height="2.2" fill="#ffd700"/><rect x="1735.9" y="234.24" width="1.2" height="2.2" fill="#ffd700"/><rect x="1739.5" y="234.24" width="1.4" height="2.2" fill="#d4d4d4"/><rect x="1741.5" y="234.24" width="1.4" height="2.2" fill="#d4d4d4"/><rect x="1745.9" y="234.24" width="1.2" height="2.2" fill="#ffd700"/><rect x="1633.5" y="238.32" width="10.0" height="2.2" fill="#c586c0"/><rect x="1645.5" y="238.32" width="12.0" height="2.2" fill="#9cdcfe"/><rect x="1659.5" y="238.32" width="10.0" height="2.2" fill="#dcdcaa"/><rect x="1669.9" y="238.32" width="1.2" height="2.2" fill="#ffd700"/><rect x="1671.9" y="238.32" width="1.2" height="2.2" fill="#ffd700"/><rect x="1633.5" y="242.40" width="10.0" height="2.2" fill="#c586c0"/><rect x="1645.5" y="242.40" width="30.0" height="2.2" fill="#dcdcaa"/><rect x="1675.9" y="242.40" width="1.2" height="2.2" fill="#ffd700"/><rect x="1677.9" y="242.40" width="1.2" height="2.2" fill="#ffd700"/><rect x="1629.9" y="246.48" width="1.2" height="2.2" fill="#ffd700"/><rect x="1631.9" y="246.48" width="1.2" height="2.2" fill="#ffd700"/><rect x="1629.5" y="250.56" width="10.0" height="2.2" fill="#c586c0"/><rect x="1641.5" y="250.56" width="12.0" height="2.2" fill="#9cdcfe"/><rect x="1655.5" y="250.56" width="12.0" height="2.2" fill="#dcdcaa"/><rect x="1667.9" y="250.56" width="1.2" height="2.2" fill="#ffd700"/><rect x="1669.9" y="250.56" width="1.2" height="2.2" fill="#ffd700"/><rect x="1629.5" y="254.64" width="20.0" height="2.2" fill="#dcdcaa"/><rect x="1649.9" y="254.64" width="1.2" height="2.2" fill="#ffd700"/><rect x="1651.5" y="254.64" width="12.0" height="2.2" fill="#9cdcfe"/><rect x="1665.5" y="254.64" width="12.0" height="2.2" fill="#9cdcfe"/><rect x="1679.5" y="254.64" width="12.0" height="2.2" fill="#9cdcfe"/><rect x="1691.9" y="254.64" width="1.2" height="2.2" fill="#ffd700"/><rect x="1629.5" y="258.72" width="12.0" height="2.2" fill="#9cdcfe"/><rect x="1643.5" y="258.72" width="18.0" height="2.2" fill="#dcdcaa"/><rect x="1661.9" y="258.72" width="1.2" height="2.2" fill="#ffd700"/><rect x="1663.9" y="258.72" width="1.2" height="2.2" fill="#ffd700"/><rect x="1625.9" y="262.80" width="1.2" height="2.2" fill="#ffd700"/><rect x="1625.5" y="266.88" width="30.0" height="2.2" fill="#dcdcaa"/><rect x="1655.9" y="266.88" width="1.2" height="2.2" fill="#ffd700"/><rect x="1657.9" y="266.88" width="1.2" height="2.2" fill="#ffd700"/><rect x="1661.5" y="266.88" width="10.0" height="2.2" fill="#dcdcaa"/><rect x="1671.9" y="266.88" width="1.2" height="2.2" fill="#ffd700"/><rect x="1673.9" y="266.88" width="1.2" height="2.2" fill="#ffd700"/><rect x="1675.5" y="266.88" width="6.0" height="2.2" fill="#9cdcfe"/><rect x="1681.9" y="266.88" width="1.2" height="2.2" fill="#ffd700"/><rect x="1685.5" y="266.88" width="1.4" height="2.2" fill="#d4d4d4"/><rect x="1687.5" y="266.88" width="1.4" height="2.2" fill="#d4d4d4"/><rect x="1691.9" y="266.88" width="1.2" height="2.2" fill="#ffd700"/><rect x="1629.5" y="270.96" width="24.0" height="2.2" fill="#dcdcaa"/><rect x="1653.9" y="270.96" width="1.2" height="2.2" fill="#ffd700"/><rect x="1655.9" y="270.96" width="1.2" height="2.2" fill="#ffd700"/><rect x="1659.5" y="270.96" width="10.0" height="2.2" fill="#dcdcaa"/><rect x="1669.9" y="270.96" width="1.2" height="2.2" fill="#ffd700"/><rect x="1633.5" y="275.04" width="2.0" height="2.2" fill="#ce9178"/><rect x="1635.5" y="275.04" width="1.4" height="2.2" fill="#d4d4d4"/><rect x="1637.9" y="275.04" width="1.2" height="2.2" fill="#ffd700"/><rect x="1639.5" y="275.04" width="2.0" height="2.2" fill="#9cdcfe"/><rect x="1643.5" y="275.04" width="6.0" height="2.2" fill="#dcdcaa"/><rect x="1649.9" y="275.04" width="1.2" height="2.2" fill="#ffd700"/><rect x="1651.5" y="275.04" width="62.0" height="2.2" fill="#ce9178"/><rect x="1713.5" y="275.04" width="10.0" height="2.2" fill="#ce9178"/><rect x="1723.5" y="275.04" width="1.4" height="2.2" fill="#d4d4d4"/><rect x="1725.9" y="275.04" width="1.2" height="2.2" fill="#ffd700"/><rect x="1727.5" y="275.04" width="6.0" height="2.2" fill="#9cdcfe"/><rect x="1735.5" y="275.04" width="10.0" height="2.2" fill="#9cdcfe"/><rect x="1745.9" y="275.04" width="1.2" height="2.2" fill="#ffd700"/><rect x="1747.5" y="275.04" width="2.0" height="2.2" fill="#ce9178"/><rect x="1629.9" y="279.12" width="1.2" height="2.2" fill="#ffd700"/><rect x="1629.5" y="283.20" width="14.0" height="2.2" fill="#9cdcfe"/><rect x="1645.5" y="283.20" width="8.0" height="2.2" fill="#dcdcaa"/><rect x="1653.9" y="283.20" width="1.2" height="2.2" fill="#ffd700"/><rect x="1655.5" y="283.20" width="2.0" height="2.2" fill="#b5cea8"/><rect x="1657.9" y="283.20" width="1.2" height="2.2" fill="#ffd700"/><rect x="1625.9" y="287.28" width="1.2" height="2.2" fill="#ffd700"/><rect x="1627.9" y="287.28" width="1.2" height="2.2" fill="#ffd700"/><rect x="1621.9" y="291.36" width="1.2" height="2.2" fill="#ffd700"/><rect x="1625.5" y="291.36" width="8.0" height="2.2" fill="#c586c0"/><rect x="1635.9" y="291.36" width="1.2" height="2.2" fill="#ffd700"/><rect x="1625.5" y="295.44" width="20.0" height="2.2" fill="#dcdcaa"/><rect x="1645.9" y="295.44" width="1.2" height="2.2" fill="#ffd700"/><rect x="1647.9" y="295.44" width="1.2" height="2.2" fill="#ffd700"/><rect x="1625.5" y="299.52" width="4.0" height="2.2" fill="#c586c0"/><rect x="1631.9" y="299.52" width="1.2" height="2.2" fill="#ffd700"/><rect x="1633.5" y="299.52" width="14.0" height="2.2" fill="#9cdcfe"/><rect x="1649.5" y="299.52" width="1.4" height="2.2" fill="#d4d4d4"/><rect x="1651.5" y="299.52" width="1.4" height="2.2" fill="#d4d4d4"/><rect x="1653.5" y="299.52" width="1.4" height="2.2" fill="#d4d4d4"/><rect x="1657.5" y="299.52" width="14.0" height="2.2" fill="#ce9178"/><rect x="1671.9" y="299.52" width="1.2" height="2.2" fill="#ffd700"/><rect x="1675.9" y="299.52" width="1.2" height="2.2" fill="#ffd700"/><rect x="1629.5" y="303.60" width="10.0" height="2.2" fill="#dcdcaa"/><rect x="1639.9" y="303.60" width="1.2" height="2.2" fill="#ffd700"/><rect x="1641.5" y="303.60" width="8.0" height="2.2" fill="#9cdcfe"/><rect x="1653.5" y="303.60" width="8.0" height="2.2" fill="#9cdcfe"/><rect x="1661.9" y="303.60" width="1.2" height="2.2" fill="#ffd700"/><rect x="1665.5" y="303.60" width="10.0" height="2.2" fill="#dcdcaa"/><rect x="1675.9" y="303.60" width="1.2" height="2.2" fill="#ffd700"/><rect x="1677.9" y="303.60" width="1.2" height="2.2" fill="#ffd700"/><rect x="1679.5" y="303.60" width="6.0" height="2.2" fill="#9cdcfe"/><rect x="1685.9" y="303.60" width="1.2" height="2.2" fill="#ffd700"/><rect x="1689.5" y="303.60" width="1.4" height="2.2" fill="#d4d4d4"/><rect x="1691.5" y="303.60" width="1.4" height="2.2" fill="#d4d4d4"/><rect x="1695.9" y="303.60" width="1.2" height="2.2" fill="#ffd700"/><rect x="1633.5" y="307.68" width="24.0" height="2.2" fill="#dcdcaa"/><rect x="1657.9" y="307.68" width="1.2" height="2.2" fill="#ffd700"/><rect x="1659.9" y="307.68" width="1.2" height="2.2" fill="#ffd700"/><rect x="1663.5" y="307.68" width="10.0" height="2.2" fill="#dcdcaa"/><rect x="1673.9" y="307.68" width="1.2" height="2.2" fill="#ffd700"/><rect x="1675.5" y="307.68" width="2.0" height="2.2" fill="#ce9178"/><rect x="1677.5" y="307.68" width="1.4" height="2.2" fill="#d4d4d4"/><rect x="1679.9" y="307.68" width="1.2" height="2.2" fill="#ffd700"/><rect x="1681.5" y="307.68" width="2.0" height="2.2" fill="#9cdcfe"/><rect x="1685.5" y="307.68" width="6.0" height="2.2" fill="#dcdcaa"/><rect x="1691.9" y="307.68" width="1.2" height="2.2" fill="#ffd700"/><rect x="1693.5" y="307.68" width="26.0" height="2.2" fill="#ce9178"/><rect x="1719.5" y="307.68" width="10.0" height="2.2" fill="#ce9178"/><rect x="1729.5" y="307.68" width="1.4" height="2.2" fill="#d4d4d4"/><rect x="1731.9" y="307.68" width="1.2" height="2.2" fill="#ffd700"/><rect x="1733.5" y="307.68" width="6.0" height="2.2" fill="#9cdcfe"/><rect x="1741.5" y="307.68" width="10.0" height="2.2" fill="#9cdcfe"/><rect x="1751.9" y="307.68" width="1.2" height="2.2" fill="#ffd700"/><rect x="1753.5" y="307.68" width="2.0" height="2.2" fill="#ce9178"/><rect x="1633.9" y="311.76" width="1.2" height="2.2" fill="#ffd700"/><rect x="1633.5" y="315.84" width="14.0" height="2.2" fill="#9cdcfe"/><rect x="1649.5" y="315.84" width="8.0" height="2.2" fill="#dcdcaa"/><rect x="1657.9" y="315.84" width="1.2" height="2.2" fill="#ffd700"/><rect x="1659.5" y="315.84" width="2.0" height="2.2" fill="#b5cea8"/><rect x="1661.9" y="315.84" width="1.2" height="2.2" fill="#ffd700"/><rect x="1629.9" y="319.92" width="1.2" height="2.2" fill="#ffd700"/><rect x="1631.9" y="319.92" width="1.2" height="2.2" fill="#ffd700"/><rect x="1625.9" y="324.00" width="1.2" height="2.2" fill="#ffd700"/><rect x="1629.5" y="324.00" width="8.0" height="2.2" fill="#c586c0"/><rect x="1639.5" y="324.00" width="4.0" height="2.2" fill="#c586c0"/><rect x="1645.9" y="324.00" width="1.2" height="2.2" fill="#ffd700"/><rect x="1647.5" y="324.00" width="14.0" height="2.2" fill="#9cdcfe"/><rect x="1663.5" y="324.00" width="1.4" height="2.2" fill="#d4d4d4"/><rect x="1665.5" y="324.00" width="1.4" height="2.2" fill="#d4d4d4"/><rect x="1667.5" y="324.00" width="1.4" height="2.2" fill="#d4d4d4"/><rect x="1671.5" y="324.00" width="14.0" height="2.2" fill="#ce9178"/><rect x="1687.5" y="324.00" width="1.4" height="2.2" fill="#d4d4d4"/><rect x="1689.5" y="324.00" width="1.4" height="2.2" fill="#d4d4d4"/><rect x="1693.5" y="324.00" width="14.0" height="2.2" fill="#9cdcfe"/><rect x="1709.5" y="324.00" width="1.4" height="2.2" fill="#d4d4d4"/><rect x="1711.5" y="324.00" width="1.4" height="2.2" fill="#d4d4d4"/><rect x="1713.5" y="324.00" width="1.4" height="2.2" fill="#d4d4d4"/><rect x="1717.5" y="324.00" width="18.0" height="2.2" fill="#ce9178"/><rect x="1735.9" y="324.00" width="1.2" height="2.2" fill="#ffd700"/><rect x="1739.9" y="324.00" width="1.2" height="2.2" fill="#ffd700"/><rect x="1629.5" y="328.08" width="10.0" height="2.2" fill="#dcdcaa"/><rect x="1639.9" y="328.08" width="1.2" height="2.2" fill="#ffd700"/><rect x="1641.5" y="328.08" width="8.0" height="2.2" fill="#9cdcfe"/><rect x="1649.9" y="328.08" width="1.2" height="2.2" fill="#ffd700"/><rect x="1653.5" y="328.08" width="10.0" height="2.2" fill="#dcdcaa"/><rect x="1663.9" y="328.08" width="1.2" height="2.2" fill="#ffd700"/><rect x="1665.9" y="328.08" width="1.2" height="2.2" fill="#ffd700"/><rect x="1667.5" y="328.08" width="6.0" height="2.2" fill="#9cdcfe"/><rect x="1673.9" y="328.08" width="1.2" height="2.2" fill="#ffd700"/><rect x="1677.5" y="328.08" width="1.4" height="2.2" fill="#d4d4d4"/><rect x="1679.5" y="328.08" width="1.4" height="2.2" fill="#d4d4d4"/><rect x="1683.9" y="328.08" width="1.2" height="2.2" fill="#ffd700"/><rect x="1633.5" y="332.16" width="24.0" height="2.2" fill="#dcdcaa"/><rect x="1657.9" y="332.16" width="1.2" height="2.2" fill="#ffd700"/><rect x="1659.9" y="332.16" width="1.2" height="2.2" fill="#ffd700"/><rect x="1663.5" y="332.16" width="10.0" height="2.2" fill="#dcdcaa"/><rect x="1673.9" y="332.16" width="1.2" height="2.2" fill="#ffd700"/><rect x="1637.5" y="336.24" width="2.0" height="2.2" fill="#ce9178"/><rect x="1639.5" y="336.24" width="1.4" height="2.2" fill="#d4d4d4"/><rect x="1641.9" y="336.24" width="1.2" height="2.2" fill="#ffd700"/><rect x="1643.5" y="336.24" width="2.0" height="2.2" fill="#9cdcfe"/><rect x="1647.5" y="336.24" width="6.0" height="2.2" fill="#dcdcaa"/><rect x="1653.9" y="336.24" width="1.2" height="2.2" fill="#ffd700"/><rect x="1655.5" y="336.24" width="62.0" height="2.2" fill="#ce9178"/><rect x="1717.5" y="336.24" width="10.0" height="2.2" fill="#ce9178"/><rect x="1727.5" y="336.24" width="1.4" height="2.2" fill="#d4d4d4"/><rect x="1729.9" y="336.24" width="1.2" height="2.2" fill="#ffd700"/><rect x="1731.5" y="336.24" width="6.0" height="2.2" fill="#9cdcfe"/><rect x="1739.5" y="336.24" width="10.0" height="2.2" fill="#9cdcfe"/><rect x="1749.9" y="336.24" width="1.2" height="2.2" fill="#ffd700"/><rect x="1751.5" y="336.24" width="2.0" height="2.2" fill="#ce9178"/><rect x="1633.9" y="340.32" width="1.2" height="2.2" fill="#ffd700"/><rect x="1633.5" y="344.40" width="14.0" height="2.2" fill="#9cdcfe"/><rect x="1649.5" y="344.40" width="8.0" height="2.2" fill="#dcdcaa"/><rect x="1657.9" y="344.40" width="1.2" height="2.2" fill="#ffd700"/><rect x="1659.5" y="344.40" width="2.0" height="2.2" fill="#b5cea8"/><rect x="1661.9" y="344.40" width="1.2" height="2.2" fill="#ffd700"/><rect x="1629.9" y="348.48" width="1.2" height="2.2" fill="#ffd700"/><rect x="1631.9" y="348.48" width="1.2" height="2.2" fill="#ffd700"/><rect x="1625.9" y="352.56" width="1.2" height="2.2" fill="#ffd700"/><rect x="1629.5" y="352.56" width="8.0" height="2.2" fill="#c586c0"/><rect x="1639.9" y="352.56" width="1.2" height="2.2" fill="#ffd700"/><rect x="1629.5" y="356.64" width="24.0" height="2.2" fill="#dcdcaa"/><rect x="1653.9" y="356.64" width="1.2" height="2.2" fill="#ffd700"/><rect x="1655.9" y="356.64" width="1.2" height="2.2" fill="#ffd700"/><rect x="1659.5" y="356.64" width="10.0" height="2.2" fill="#dcdcaa"/><rect x="1669.9" y="356.64" width="1.2" height="2.2" fill="#ffd700"/><rect x="1671.5" y="356.64" width="2.0" height="2.2" fill="#9cdcfe"/><rect x="1675.5" y="356.64" width="6.0" height="2.2" fill="#dcdcaa"/><rect x="1681.9" y="356.64" width="1.2" height="2.2" fill="#ffd700"/><rect x="1683.5" y="356.64" width="36.0" height="2.2" fill="#ce9178"/><rect x="1719.5" y="356.64" width="1.4" height="2.2" fill="#d4d4d4"/><rect x="1721.9" y="356.64" width="1.2" height="2.2" fill="#ffd700"/><rect x="1723.5" y="356.64" width="14.0" height="2.2" fill="#9cdcfe"/><rect x="1737.9" y="356.64" width="1.2" height="2.2" fill="#ffd700"/><rect x="1739.5" y="356.64" width="1.4" height="2.2" fill="#d4d4d4"/><rect x="1743.5" y="356.64" width="6.0" height="2.2" fill="#ce9178"/><rect x="1629.5" y="360.72" width="14.0" height="2.2" fill="#9cdcfe"/><rect x="1645.5" y="360.72" width="8.0" height="2.2" fill="#dcdcaa"/><rect x="1653.9" y="360.72" width="1.2" height="2.2" fill="#ffd700"/><rect x="1655.5" y="360.72" width="2.0" height="2.2" fill="#b5cea8"/><rect x="1657.9" y="360.72" width="1.2" height="2.2" fill="#ffd700"/><rect x="1625.9" y="364.80" width="1.2" height="2.2" fill="#ffd700"/><rect x="1621.9" y="368.88" width="1.2" height="2.2" fill="#ffd700"/></g>
 <line x1="1762.5" y1="140" x2="1762.5" y2="1078" stroke="#444444" stroke-width="1.2"/>
 <line x1="1762" y1="140.5" x2="1770" y2="140.5" stroke="#444444" stroke-width="1"/>
 <rect x="1763" y="223" width="7" height="4" fill="#b8b8b8"/>
 <rect x="1763" y="227" width="7" height="11" fill="#4d4d26"/>
</svg>
<!-- panel -->
<div class="abs" style="left:6px;top:1078px;width:1764px;height:2px;background:#454545"></div>
<div class="t" style="left:480px;top:1102.6px;font-size:22px;color:#9d9d9d;transform:scaleY(1.16);transform-origin:0 0">GITLENS</div>
<div class="abs" style="left:384px;top:1140px;width:52px;height:2px;background:#e7e7e7"></div>
<svg class="abs" style="left:0;top:0" width="700" height="1160"><g transform="translate(46.50 1104.37) scale(0.2160)"><path d="M16 4L24 16M14 24V96M30 10H86V88Q86 96 76 94M36 42V72M36 42H64V72M36 70H64" stroke="#9d9d9d" stroke-width="8.0" fill="none" stroke-linecap="square"/></g><g transform="translate(68.20 1104.37) scale(0.2160)"><path d="M10 8V38M10 8H44V38M10 23H44M10 37H44M6 50H48M28 50V82M28 64H44M16 58Q12 78 4 92M14 80Q30 92 50 92M54 8H96M76 8L72 20M60 22V74M60 22H92V74M60 40H92M60 56H92M70 78L56 94M82 78L96 94" stroke="#9d9d9d" stroke-width="8.0" fill="none" stroke-linecap="square"/></g><g transform="translate(138.80 1104.37) scale(0.2160)"><path d="M6 22H40M24 6L12 50H42M24 30V96M4 72H44M70 4L50 28M70 4L96 28M58 34H84M54 46V94M54 46H72V92M54 60H72M54 74H72M82 46V80M94 40V92Q94 96 88 94" stroke="#9d9d9d" stroke-width="8.0" fill="none" stroke-linecap="square"/></g><g transform="translate(160.50 1104.37) scale(0.2160)"><path d="M50 4V94M16 14V44H84V14M8 54V94H92V54" stroke="#9d9d9d" stroke-width="8.0" fill="none" stroke-linecap="square"/></g><g transform="translate(231.20 1104.37) scale(0.2160)"><path d="M14 8L22 20M6 36H20V86L30 76M38 10V80Q36 92 30 96M38 10H92V90Q92 96 84 94M50 30H80M65 20V50M48 50H82M52 62V82M52 62H78V82M52 80H78" stroke="#9d9d9d" stroke-width="8.0" fill="none" stroke-linecap="square"/></g><g transform="translate(252.90 1104.37) scale(0.2160)"><path d="M14 8L22 20M6 36H20V86L30 76M36 28H96M78 6Q80 60 96 90V78M86 10L94 18M40 48H66M52 48V80M36 84L70 72" stroke="#9d9d9d" stroke-width="8.0" fill="none" stroke-linecap="square"/></g><g transform="translate(274.60 1104.37) scale(0.2160)"><path d="M4 32H30M18 6V90Q18 96 10 94M4 70L32 56M64 2V12M38 14V26M38 14H94V26M56 30L44 46M74 30L88 46M44 58H88M66 58V92M38 92H96" stroke="#9d9d9d" stroke-width="8.0" fill="none" stroke-linecap="square"/></g><g transform="translate(296.30 1104.37) scale(0.2160)"><path d="M20 8L12 22M10 22H58M6 40H62M34 6V96M12 56V80M12 56H56V78Q56 82 50 82M72 16V74M90 6V90Q90 96 80 94" stroke="#9d9d9d" stroke-width="8.0" fill="none" stroke-linecap="square"/></g><g transform="translate(318.00 1104.37) scale(0.2160)"><path d="M46 6L20 40L82 36M66 22L88 44M20 54V96M20 54H80V96M20 94H80" stroke="#9d9d9d" stroke-width="8.0" fill="none" stroke-linecap="square"/></g><g transform="translate(388.80 1104.37) scale(0.2160)"><path d="M28 6L10 34L32 34L10 62L36 56M6 88L38 74M62 4L46 26M58 14H88Q72 44 44 58M60 22Q76 46 96 54M64 66L76 72M56 82L80 94" stroke="#e7e7e7" stroke-width="8.0" fill="none" stroke-linecap="square"/></g><g transform="translate(410.50 1104.37) scale(0.2160)"><path d="M22 4V14M6 20H40M12 34L20 60M34 34L26 60M4 70H42M70 2V18M52 8V22H90V8M48 34H96M72 34L64 48M54 50V94M54 50H92V92Q92 96 86 94M66 56V90M78 56V90" stroke="#e7e7e7" stroke-width="8.0" fill="none" stroke-linecap="square"/></g></svg>
<div class="t" style="left:1219.50px;top:1104.3px;font-size:23.4px;color:#cccccc">JavaScript</div>
<div class="t" style="left:1335.19px;top:1104.3px;font-size:23.4px;color:#cccccc">Debug</div>
<div class="t" style="left:1410.19px;top:1104.3px;font-size:23.4px;color:#cccccc">Terminal</div>
<svg class="abs" style="left:0;top:0" width="1770" height="1160">
 <g fill="none" stroke="#cccccc" stroke-width="2">
  <path d="M1103 1113.7H1129.2M1116.1 1101V1126.8"/>
  <path d="M1141.8 1112L1149.3 1119.3L1156.5 1112" stroke-width="1.6"/>
  <rect x="1182.4" y="1102" width="25.6" height="25.8" rx="3"/>
  <path d="M1191.3 1108.2L1198.8 1115.3L1191.3 1122.4"/>
  <rect x="1525.4" y="1102.4" width="23.2" height="23.2" rx="2.5"/><line x1="1537" y1="1102.4" x2="1537" y2="1125.6"/>
  <path d="M1576.3 1105.7H1597.6M1582.4 1105.7V1102.4H1591.5V1105.7M1578.8 1105.7V1123.6Q1578.8 1126.2 1581.4 1126.2H1592.6Q1595.2 1126.2 1595.2 1123.6V1105.7M1582.8 1109V1122.8M1587 1109V1122.8M1591.2 1109V1122.8"/>
  <path d="M1682.3 1117.9L1691.9 1108.6L1701.6 1117.9"/>
  <path d="M1735.7 1105.6L1752.4 1122.3M1752.4 1105.6L1735.7 1122.3"/>
 </g>
 <g fill="#cccccc"><circle cx="1629.7" cy="1114.7" r="2.1"/><circle cx="1639.9" cy="1114.7" r="2.1"/><circle cx="1650" cy="1114.7" r="2.1"/></g>
</svg>
<!-- terminal -->
<svg class="abs" style="left:0;top:1170px" width="60" height="40"><circle cx="28.2" cy="21.8" r="6" fill="none" stroke="#6b6b6b" stroke-width="2.4"/></svg>
<svg class="abs" style="left:0;top:0" width="600" height="1210"><path d="M562.2 1185.8Q557 1191 552.4 1199.2M555.2 1187.4L560.2 1197.2" stroke="#f5f543" stroke-width="2.7" fill="none" stroke-linecap="round"/></svg>
<div class="abs mono" style="left:45.3px;top:1179.8px;font-size:25px;letter-spacing:-0.98px;line-height:28px;white-space:pre;color:#cccccc"><span style="color:#5fd38d;font-weight:bold">5304</span><span style="color:#cccccc;"> </span><span style="color:#4fb4d8;font-weight:bold">press-lab/vitepress</span><span style="color:#cccccc;"> </span><span style="color:#4d90e8;font-weight:bold">git:(</span><span style="color:#e8584f;font-weight:bold">main</span><span style="color:#4d90e8;font-weight:bold">)</span><span style="color:#cccccc;"> </span><span style="color:#f5f543;font-weight:bold"> </span><span style="color:#cccccc;"> » tsx src/node/cli.ts dev docs</span>
Debugger attached.
Debugger attached.</div>
<div class="abs" style="left:46px;top:1262px;width:14px;height:28px;background:#c8c8c8"></div>
<!-- annotation arrows -->
<svg class="abs" style="left:0;top:0" width="1770" height="1388"><path d="M1095.0 102.0 L1152.0 82.0 L1143.0 97.0 L1327.1 145.9 L1324.9 156.1 L1137.0 126.0 L1139.0 143.0 Z" fill="#e94025" stroke="#e94025" stroke-width="1" stroke-linejoin="round"/><circle cx="1326.0" cy="151.0" r="5.25" fill="#e94025"/><path d="M180.0 495.0 L166.4 449.0 L160.0 461.6 L58.4 376.8 L51.6 384.2 L144.8 478.8 L131.8 486.0 Z" fill="#e94025" stroke="#e94025" stroke-width="1" stroke-linejoin="round"/><circle cx="55.0" cy="380.5" r="5.00" fill="#e94025"/><path d="M1029.7 1195.4 L1084.4 1170.7 L1076.9 1187.5 L1379.2 1234.6 L1377.8 1245.2 L1073.7 1215.8 L1076.2 1233.0 Z" fill="#e94025" stroke="#e94025" stroke-width="1" stroke-linejoin="round"/><circle cx="1378.5" cy="1239.9" r="5.35" fill="#e94025"/></svg>
</body></html>
